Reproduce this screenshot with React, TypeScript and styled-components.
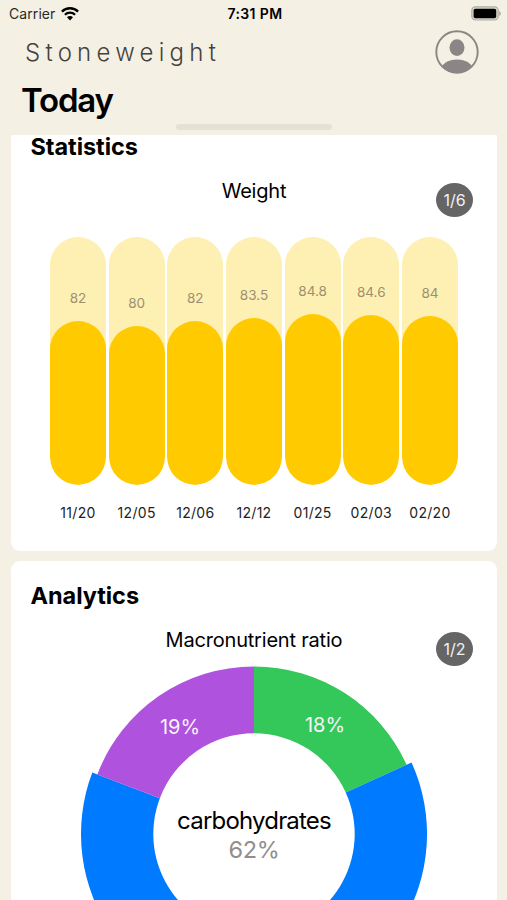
import React from 'react';
import styled, { createGlobalStyle } from 'styled-components';

const GlobalStyle = createGlobalStyle`
  * { box-sizing: border-box; }
  html, body { margin: 0; padding: 0; background: #f5f0e4; }
  body { font-family: Inter, "Liberation Sans", sans-serif; color: #000; overflow: hidden; }
`;

const Screen = styled.main`
  width: 507px;
  height: 900px;
  background: #f5f0e4;
  overflow: hidden;
  display: flex;
  flex-direction: column;
`;

const StatusBar = styled.div`
  height: 27px;
  flex: none;
  display: grid;
  grid-template-columns: 1fr auto 1fr;
  align-items: center;
  padding: 0 6px 0 9px;
  font-size: 14px;
  line-height: 27px;
`;

const Carrier = styled.div`
  display: flex;
  align-items: center;
  gap: 6px;
  color: #2b2a28;
  letter-spacing: 0.08px;
`;

const Clock = styled.div`
  font-weight: 600;
  font-size: 14px;
  letter-spacing: 0.35px;
`;

const Battery = styled.svg`
  justify-self: end;
  display: block;
`;

const Header = styled.header`
  height: 50px;
  flex: none;
  display: flex;
  align-items: center;
  justify-content: space-between;
  padding: 0 28px 0 25px;
`;

const Brand = styled.div`
  font-size: 24px;
  font-weight: 300;
  letter-spacing: 5.25px;
  color: #45423c;
`;

const PageTitle = styled.h1`
  margin: 0;
  height: 47px;
  flex: none;
  padding: 1px 0 0 21px;
  font-size: 33px;
  line-height: 44px;
  font-weight: 600;
  letter-spacing: -1.2px;
`;

const Grabber = styled.div`
  width: 156px;
  height: 6px;
  flex: none;
  margin: 0 auto 5px;
  border-radius: 3px;
  background: #e6e1d5;
`;

const Feed = styled.div`
  flex: 1;
  min-height: 0;
  display: flex;
  flex-direction: column;
  gap: 10px;
  padding: 0 10px 0 11px;
`;

const Card = styled.section<{ $height: number; $clipped?: boolean }>`
  height: ${(p) => p.$height}px;
  flex: none;
  background: #fff;
  border-radius: ${(p) => (p.$clipped ? '1px 1px 9px 9px' : '9px')};
  padding-top: ${(p) => (p.$clipped ? 0 : 23)}px;
`;

const CardTitle = styled.h2`
  margin: 0;
  padding-left: 19.5px;
  height: 24px;
  font-size: 23.5px;
  line-height: 24px;
  font-weight: 650;
  letter-spacing: -0.05px;
`;

const ChartHeader = styled.div`
  display: grid;
  grid-template-columns: 61px 1fr 61px;
  height: 56px;
  margin-top: 22px;
`;

const ChartTitle = styled.div`
  grid-column: 2;
  text-align: center;
  font-size: 20px;
  line-height: 20px;
  letter-spacing: -0.2px;
`;

const Counter = styled.div`
  width: 37px;
  height: 34px;
  margin-top: 2px;
  border-radius: 50% / 50%;
  background: #656565;
  color: #f2f2f2;
  font-size: 16px;
  line-height: 34px;
  text-align: center;
`;

const Bars = styled.div`
  display: grid;
  grid-template-columns: repeat(7, 56px);
  column-gap: 2.67px;
  padding-left: 39px;
`;

const Track = styled.div`
  height: 248px;
  border-radius: 28px;
  background: #feefb3;
  display: flex;
  flex-direction: column;
  justify-content: flex-end;
  overflow: hidden;
`;

const BarValue = styled.div`
  text-align: center;
  font-size: 13.5px;
  line-height: 16px;
  margin-bottom: 15px;
  color: #9b9170;
`;

const Fill = styled.div`
  flex: none;
  border-radius: 28px;
  background: #ffcb00;
`;

const BarLabel = styled.div`
  margin-top: 20px;
  text-align: center;
  font-size: 14px;
  line-height: 16px;
  letter-spacing: 0.3px;
  color: #222;
  white-space: nowrap;
`;

const DonutBox = styled.div`
  display: grid;
  justify-content: center;
  margin-top: -25px;
`;

const Donut = styled.svg`
  display: block;
  width: 346px;
  height: 346px;
`;

const SliceText = styled.text`
  font-size: 20px;
  fill: #f8f3fb;
  text-anchor: middle;
`;

const CenterText = styled.text<{ $muted?: boolean }>`
  font-size: ${(p) => (p.$muted ? 23.5 : 24)}px;
  letter-spacing: ${(p) => (p.$muted ? -0.4 : -0.8)}px;
  fill: ${(p) => (p.$muted ? '#8f8f8f' : '#000')};
  text-anchor: middle;
`;

const weights = [
  { date: '11/20', value: '82', fill: 164 },
  { date: '12/05', value: '80', fill: 159 },
  { date: '12/06', value: '82', fill: 164 },
  { date: '12/12', value: '83.5', fill: 167.5 },
  { date: '01/25', value: '84.8', fill: 170.6 },
  { date: '02/03', value: '84.6', fill: 170 },
  { date: '02/20', value: '84', fill: 168.7 },
];

function slicePath(from: number, to: number, outer: number, inner: number) {
  const at = (r: number, deg: number) => {
    const a = (deg * Math.PI) / 180;
    return `${(r * Math.sin(a)).toFixed(2)} ${(-r * Math.cos(a)).toFixed(2)}`;
  };
  const large = to - from > 180 ? 1 : 0;
  return `M${at(outer, from)}A${outer} ${outer} 0 ${large} 1 ${at(outer, to)}L${at(inner, to)}A${inner} ${inner} 0 ${large} 0 ${at(inner, from)}Z`;
}

function WifiIcon() {
  return (
    <svg width="18" height="14" viewBox="0 0 18 14" fill="none" stroke="#000">
      <path d="M0.9 4.6a11.5 11.5 0 0 1 16.2 0" strokeWidth="2.3" />
      <path d="M3.9 7.8a7.2 7.2 0 0 1 10.2 0" strokeWidth="2.2" />
      <path d="M9 13.4 6 10.3a4.2 4.2 0 0 1 6 0Z" fill="#000" stroke="none" />
    </svg>
  );
}

function ProfileIcon() {
  return (
    <svg width="44" height="44" viewBox="0 0 44 44">
      <defs>
        <clipPath id="avatar"><circle cx="22" cy="22" r="21" /></clipPath>
      </defs>
      <circle cx="22" cy="22" r="20.7" fill="none" stroke="#8b8680" strokeWidth="1.9" />
      <ellipse cx="22" cy="17.6" rx="7.5" ry="8.3" fill="#8a8685" />
      <ellipse cx="22" cy="40.4" rx="16" ry="11" fill="#8a8685" clipPath="url(#avatar)" />
    </svg>
  );
}

export default function App() {
  return (
    <>
      <GlobalStyle />
      <Screen>
        <StatusBar>
          <Carrier>Carrier <WifiIcon /></Carrier>
          <Clock>7:31 PM</Clock>
          <Battery width="30" height="15" viewBox="0 0 30 15">
            <rect x="0.8" y="0.8" width="26.4" height="13.2" rx="3.6" fill="#d9d5ca" stroke="#b1ada3" strokeWidth="1.2" />
            <rect x="2.6" y="2.7" width="22.6" height="9.6" rx="1.8" fill="#000" />
            <path d="M28.2 5v5q1.6-.7 1.6-2.5T28.2 5Z" fill="#aaa69d" />
          </Battery>
        </StatusBar>
        <Header>
          <Brand>Stoneweight</Brand>
          <ProfileIcon />
        </Header>
        <PageTitle>Today</PageTitle>
        <Grabber />
        <Feed>
          <Card $height={416} $clipped>
            <CardTitle>Statistics</CardTitle>
            <ChartHeader>
              <ChartTitle>Weight</ChartTitle>
              <Counter>1/6</Counter>
            </ChartHeader>
            <Bars>
              {weights.map((w) => (
                <div key={w.date}>
                  <Track>
                    <BarValue>{w.value}</BarValue>
                    <Fill style={{ height: w.fill }} />
                  </Track>
                  <BarLabel>{w.date}</BarLabel>
                </div>
              ))}
            </Bars>
          </Card>
          <Card $height={520}>
            <CardTitle>Analytics</CardTitle>
            <ChartHeader>
              <ChartTitle>Macronutrient ratio</ChartTitle>
              <Counter>1/2</Counter>
            </ChartHeader>
            <DonutBox>
              <Donut viewBox="-173 -173 346 346">
                <path d={slicePath(0, 65.6, 167.6, 100.7)} fill="#34c759" />
                <path d={slicePath(65.6, 290.8, 173, 100.7)} fill="#007aff" />
                <path d={slicePath(290.8, 360, 167.6, 100.7)} fill="#af52de" />
                <SliceText x="71" y="-102.3">18%</SliceText>
                <SliceText x="-74" y="-100">19%</SliceText>
                <CenterText x="0" y="-5.5">carbohydrates</CenterText>
                <CenterText x="0" y="23.5" $muted>62%</CenterText>
              </Donut>
            </DonutBox>
          </Card>
        </Feed>
      </Screen>
    </>
  );
}
